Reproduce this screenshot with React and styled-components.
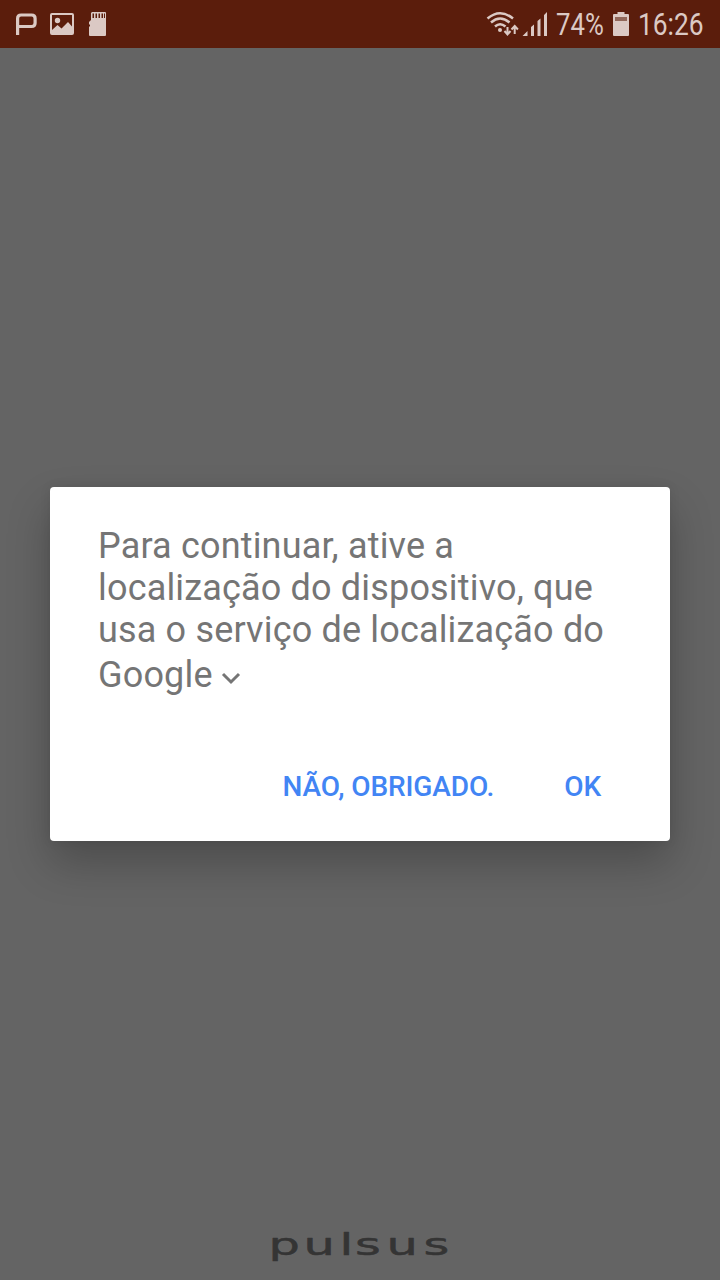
import React from 'react';
import styled, { createGlobalStyle } from 'styled-components';

const GlobalStyle = createGlobalStyle`
  * { box-sizing: border-box; }
  body { margin: 0; background: #646464; font-family: Roboto, sans-serif; }
`;

const Screen = styled.div`
  width: 720px;
  height: 1280px;
  display: flex;
  flex-direction: column;
  background: #646464;
  overflow: hidden;
`;

const StatusBar = styled.header`
  height: 48px;
  flex: none;
  display: flex;
  justify-content: space-between;
  background: #5b1d0c;
  color: #dbc9c4;
`;

const StatusGroup = styled.div`
  display: flex;
  height: 48px;
`;

const StatusIcon = styled.svg`
  display: block;
  flex: none;
  width: ${(p) => p.$width}px;
  height: 48px;
`;

const StatusText = styled.span`
  width: ${(p) => p.$width}px;
  flex: none;
  font-size: 31px;
  line-height: 48px;
  white-space: nowrap;
  transform: translateY(1px) scaleX(${(p) => p.$stretch});
  transform-origin: left center;
`;

const Stage = styled.main`
  flex: 1;
  display: flex;
  flex-direction: column;
  align-items: center;
  justify-content: space-between;
  padding-top: 439px;
`;

const Dialog = styled.section`
  width: 620px;
  height: 354px;
  display: flex;
  flex-direction: column;
  justify-content: space-between;
  padding: 38px 48px 33px;
  border-radius: 4px;
  background: #fff;
  box-shadow: 0 22px 44px rgba(0, 0, 0, 0.24), 0 0 12px rgba(0, 0, 0, 0.08);
`;

const Message = styled.p`
  margin: 0;
  color: #757575;
  font-size: 36px;
  line-height: 42px;
  letter-spacing: 0.17px;
  white-space: nowrap;
`;

const LastLine = styled.span`
  display: flex;
  align-items: center;
  gap: 8px;
  padding-top: 3px;
`;

const Chevron = styled.svg`
  width: 20px;
  height: 14px;
  margin-top: 8px;
`;

const Actions = styled.div`
  display: flex;
  justify-content: flex-end;
  gap: 70px;
  padding-right: 21px;
`;

const ActionButton = styled.button`
  border: 0;
  padding: 0;
  background: none;
  color: #4285f4;
  font: 500 28px/42px Roboto, sans-serif;
  letter-spacing: -0.12px;
  white-space: nowrap;
`;

const Wordmark = styled.svg`
  display: block;
  width: 200px;
  height: 60px;
  flex: none;
`;

const LETTER_WIDTH = 1.65;
const brandPositions = [268.5, 303.5, 339.5, 355, 386.5, 423.5]
  .map((x) => (x - 260) / LETTER_WIDTH)
  .join(' ');

export default function App() {
  return (
    <>
      <GlobalStyle />
      <Screen>
        <StatusBar>
          <StatusGroup>
            <StatusIcon $width={120} viewBox="0 0 120 48" fill="currentColor">
              <path
                d="M17.600 35V18.500q0-3.500 3.500-3.500h10.500q3.500 0 3.500 3.500v4.500q0 3.500-3.500 3.500H18"
                fill="none"
                stroke="currentColor"
                strokeWidth="3.200"
              />
              <path
                fillRule="evenodd"
                d="M52 13h20q2 0 2 2v18q0 2-2 2H52q-2 0-2-2V15q0-2 2-2zm0 2v15l5.500-5 4 3.500 6.500-6.500 4 4.500V15zM57.500 17.800a2.700 2.700 0 1 1 0 5.400a2.700 2.700 0 0 1 0-5.400z"
              />
              <path
                fillRule="evenodd"
                d="M92 12h13q1 0 1 1v22q0 1-1 1H90q-1 0-1-1v-8l1-1v-1l-1-1v-2l2-2v-7zm.500 1.500v4.500H94v-4.500zm3 0v4.500H97v-4.500zm3 0v4.500h1.500v-4.500zm3 0v4.500h1.500v-4.500zm2.500 0v4.500h1v-4.500z"
              />
            </StatusIcon>
          </StatusGroup>
          <StatusGroup>
            <StatusIcon $width={70} viewBox="486 0 70 48" fill="currentColor">
              <g fill="none" stroke="currentColor" strokeWidth="2.500">
                <path d="M487.500 18.500Q500 8 513 18.500" />
                <path d="M491 22.500Q500 14.500 509.500 22.500" />
                <path d="M495 26.500Q500 22 505.500 26.500" />
              </g>
              <circle cx="500" cy="30" r="2" />
              <g fill="none" stroke="currentColor" strokeWidth="2">
                <path d="M507.500 27v8M504.500 31l3 3.500 3-3.500" />
                <path d="M514.700 34v-8M511.500 29.500l3.200-3.500 3.200 3.500" />
              </g>
              <path d="M522.500 36l5-5v5zM531 36v-9l3-2.500V36zM537.500 36V21l3-2.500V36zM544 36V15l3-3v24z" />
            </StatusIcon>
            <StatusText $width={57} $stretch={0.83}>74%</StatusText>
            <StatusIcon $width={25} viewBox="613 0 25 48" fill="currentColor">
              <path d="M614 14h3.500v-2h7v2h3.500q1 0 1 1v20q0 1-1 1h-14q-1 0-1-1V15q0-1 1-1z" />
              <path d="M615 17h12v4h-12z" fill="#91675a" />
            </StatusIcon>
            <StatusText $width={82} $stretch={0.85}>16:26</StatusText>
          </StatusGroup>
        </StatusBar>
        <Stage>
          <Dialog role="dialog">
            <Message>
              Para continuar, ative a<br />
              localização do dispositivo, que<br />
              usa o serviço de localização do
              <LastLine>
                Google
                <Chevron viewBox="0 0 20 14" fill="none" stroke="currentColor" strokeWidth="3">
                  <path d="M2 2l8 8 8-8" />
                </Chevron>
              </LastLine>
            </Message>
            <Actions>
              <ActionButton>NÃO, OBRIGADO.</ActionButton>
              <ActionButton>OK</ActionButton>
            </Actions>
          </Dialog>
          <Wordmark viewBox="0 0 200 60">
            <text
              x={brandPositions}
              y="35"
              transform={`scale(${LETTER_WIDTH} 1)`}
              fontFamily="DejaVu Sans, sans-serif"
              fontSize="30"
              fill="#343434"
              stroke="#343434"
              strokeWidth="0.5"
              strokeLinejoin="round"
            >
              pulsus
            </text>
          </Wordmark>
        </Stage>
      </Screen>
    </>
  );
}
